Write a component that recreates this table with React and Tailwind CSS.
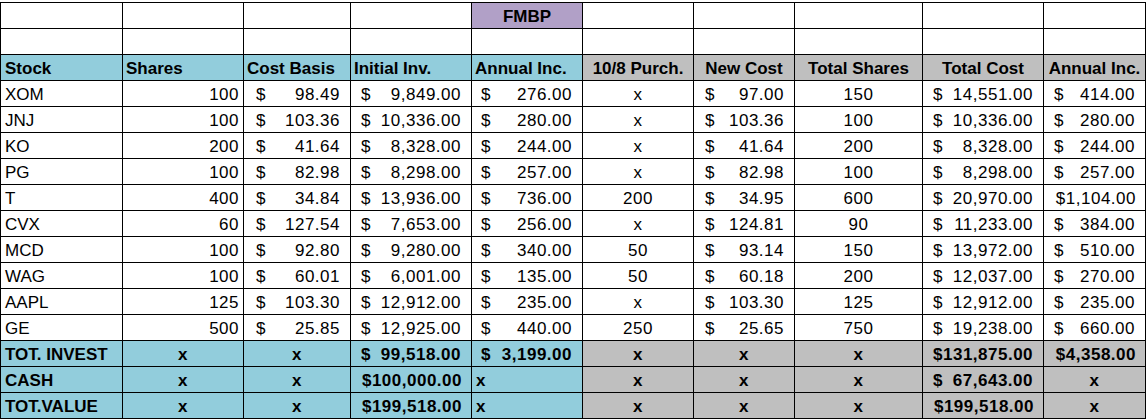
// Portfolio sheet (FMBP)
const blue = 'bg-[#92cddc]';
const grey = 'bg-[#bfbfbf]';

const stocks = [
  ['XOM', '100', '98.49', '9,849.00', '276.00', 'x', '97.00', '150', '14,551.00', '414.00'],
  ['JNJ', '100', '103.36', '10,336.00', '280.00', 'x', '103.36', '100', '10,336.00', '280.00'],
  ['KO', '200', '41.64', '8,328.00', '244.00', 'x', '41.64', '200', '8,328.00', '244.00'],
  ['PG', '100', '82.98', '8,298.00', '257.00', 'x', '82.98', '100', '8,298.00', '257.00'],
  ['T', '400', '34.84', '13,936.00', '736.00', '200', '34.95', '600', '20,970.00', '$1,104.00'],
  ['CVX', '60', '127.54', '7,653.00', '256.00', 'x', '124.81', '90', '11,233.00', '384.00'],
  ['MCD', '100', '92.80', '9,280.00', '340.00', '50', '93.14', '150', '13,972.00', '510.00'],
  ['WAG', '100', '60.01', '6,001.00', '135.00', '50', '60.18', '200', '12,037.00', '270.00'],
  ['AAPL', '125', '103.30', '12,912.00', '235.00', 'x', '103.30', '125', '12,912.00', '235.00'],
  ['GE', '500', '25.85', '12,925.00', '440.00', '250', '25.65', '750', '19,238.00', '660.00'],
];

const headers = ['Stock', 'Shares', 'Cost Basis', 'Initial Inv.', 'Annual Inc.', '10/8 Purch.', 'New Cost', 'Total Shares', 'Total Cost', 'Annual Inc.'];

const Cell = ({ bg = 'bg-white', className = '', children }) => (
  <div className={`${bg} flex items-end pb-[1px] leading-[20px] overflow-hidden whitespace-nowrap ${className}`}>
    {children}
  </div>
);

const Acct = ({ v, bg, bold, pl = 'pl-[10px]', pr = 'pr-[10px]' }) =>
  v.startsWith('$') ? (
    // too wide for padding: Excel squeezes the $ against the number
    <Cell bg={bg} className={`justify-end tracking-[0.5px] pr-[9px] ${bold ? 'font-bold' : ''}`}>{v}</Cell>
  ) : (
    <Cell bg={bg} className={`justify-between tracking-[0.5px] ${pl} ${pr} ${bold ? 'font-bold' : ''}`}>
      <span>$</span>
      <span>{v}</span>
    </Cell>
  );

const Center = ({ v, bg, bold }) => (
  <Cell bg={bg} className={`justify-center tracking-[0.5px] ${bold ? 'font-bold' : ''}`}>{v}</Cell>
);

const StockRow = ({ r }) => (
  <>
    <Cell className="pl-[4px]">{r[0]}</Cell>
    <Cell className="justify-end pr-[4px] tracking-[0.5px]">{r[1]}</Cell>
    <Acct v={r[2]} pl="pl-[12px]" />
    <Acct v={r[3]} />
    <Acct v={r[4]} pl="pl-[9px]" />
    <Center v={r[5]} />
    <Acct v={r[6]} pl="pl-[11px]" />
    <Center v={r[7]} />
    <Acct v={r[8]} />
    <Acct v={r[9]} />
  </>
);

const TotalRow = ({ label, inv, inc, cost, annual }) => (
  <>
    <Cell bg={blue} className="pl-[4px] font-bold">{label}</Cell>
    <Center v="x" bg={blue} bold />
    <Center v="x" bg={blue} bold />
    <Acct v={inv} bg={blue} bold />
    {inc ? (
      <Acct v={inc} bg={blue} bold pl="pl-[9px]" />
    ) : (
      <Cell bg={blue} className="pl-[4px] font-bold">x</Cell>
    )}
    <Center v="x" bg={grey} bold />
    <Center v="x" bg={grey} bold />
    <Center v="x" bg={grey} bold />
    <Acct v={cost} bg={grey} bold />
    {annual ? <Acct v={annual} bg={grey} bold /> : <Center v="x" bg={grey} bold />}
  </>
);

export default function App() {
  return (
    <div className="w-[1146px] h-[420px] bg-white pt-[2px] font-['Liberation_Sans',Arial,sans-serif] text-[17px] text-black">
      <div className="grid grid-cols-[121px_120px_106px_120px_110px_110px_100px_127px_120px_101px] auto-rows-[25px] gap-px bg-black p-px">
        {/* title rows */}
        {Array.from({ length: 10 }).map((_, i) =>
          i === 4 ? (
            <Cell key={i} bg="bg-[#b1a0c7]" className="justify-center font-bold">FMBP</Cell>
          ) : (
            <Cell key={i} />
          )
        )}
        {Array.from({ length: 10 }).map((_, i) => (
          <Cell key={'e' + i} />
        ))}

        {/* column headers */}
        {headers.map((h, i) => (
          <Cell
            key={'h' + i}
            bg={i < 5 ? blue : grey}
            className={`font-bold ${i === 0 ? 'pl-[4px]' : i < 5 ? 'pl-[3px]' : 'justify-center'}`}
          >
            {h}
          </Cell>
        ))}

        {stocks.map((r) => (
          <StockRow key={r[0]} r={r} />
        ))}

        <TotalRow label="TOT. INVEST" inv="99,518.00" inc="3,199.00" cost="131,875.00" annual="$4,358.00" />
        <TotalRow label="CASH" inv="$100,000.00" cost="67,643.00" />
        <TotalRow label="TOT.VALUE" inv="$199,518.00" cost="$199,518.00" />
      </div>
    </div>
  );
}
